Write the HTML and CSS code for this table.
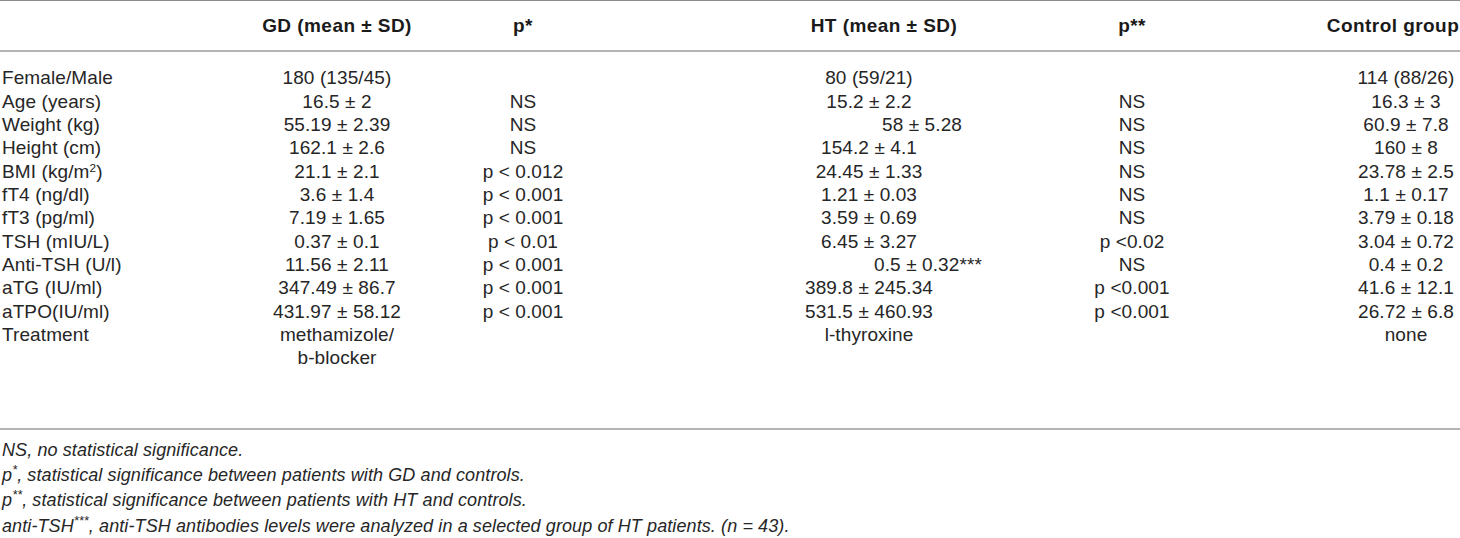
FILE: index.html
```html
<!DOCTYPE html>
<html lang="en">
<head>
  <meta charset="UTF-8" />
  <meta name="viewport" content="width=device-width, initial-scale=1.0" />
  <title>Patient characteristics</title>
  <link rel="stylesheet" href="styles.css">
</head>
<body>
  <table class="data-table">
    <colgroup>
      <col class="col-label">
      <col class="col-gd">
      <col class="col-p1">
      <col class="col-ht">
      <col class="col-p2">
      <col class="col-ctrl">
    </colgroup>
    <thead>
      <tr>
        <th></th>
        <th>GD (mean ± SD)</th>
        <th>p*</th>
        <th>HT (mean ± SD)</th>
        <th>p**</th>
        <th>Control group</th>
      </tr>
    </thead>
    <tbody>
      <tr class="first">
        <td>Female/Male</td><td>180 (135/45)</td><td></td><td>80 (59/21)</td><td></td><td>114 (88/26)</td>
      </tr>
      <tr>
        <td>Age (years)</td><td>16.5 ± 2</td><td>NS</td><td>15.2 ± 2.2</td><td>NS</td><td>16.3 ± 3</td>
      </tr>
      <tr>
        <td>Weight (kg)</td><td>55.19 ± 2.39</td><td>NS</td><td class="indent">58 ± 5.28</td><td>NS</td><td>60.9 ± 7.8</td>
      </tr>
      <tr>
        <td>Height (cm)</td><td>162.1 ± 2.6</td><td>NS</td><td>154.2 ± 4.1</td><td>NS</td><td>160 ± 8</td>
      </tr>
      <tr>
        <td>BMI (kg/m<sup>2</sup>)</td><td>21.1 ± 2.1</td><td>p &lt; 0.012</td><td>24.45 ± 1.33</td><td>NS</td><td>23.78 ± 2.5</td>
      </tr>
      <tr>
        <td>fT4 (ng/dl)</td><td>3.6 ± 1.4</td><td>p &lt; 0.001</td><td>1.21 ± 0.03</td><td>NS</td><td>1.1 ± 0.17</td>
      </tr>
      <tr>
        <td>fT3 (pg/ml)</td><td>7.19 ± 1.65</td><td>p &lt; 0.001</td><td>3.59 ± 0.69</td><td>NS</td><td>3.79 ± 0.18</td>
      </tr>
      <tr>
        <td>TSH (mIU/L)</td><td>0.37 ± 0.1</td><td>p &lt; 0.01</td><td>6.45 ± 3.27</td><td>p &lt;0.02</td><td>3.04 ± 0.72</td>
      </tr>
      <tr>
        <td>Anti-TSH (U/l)</td><td>11.56 ± 2.11</td><td>p &lt; 0.001</td><td class="indent wide">0.5 ± 0.32***</td><td>NS</td><td>0.4 ± 0.2</td>
      </tr>
      <tr>
        <td>aTG (IU/ml)</td><td>347.49 ± 86.7</td><td>p &lt; 0.001</td><td>389.8 ± 245.34</td><td>p &lt;0.001</td><td>41.6 ± 12.1</td>
      </tr>
      <tr>
        <td>aTPO(IU/ml)</td><td>431.97 ± 58.12</td><td>p &lt; 0.001</td><td>531.5 ± 460.93</td><td>p &lt;0.001</td><td>26.72 ± 6.8</td>
      </tr>
      <tr class="last">
        <td>Treatment</td><td>methamizole/<br>b-blocker</td><td></td><td>l-thyroxine</td><td></td><td>none</td>
      </tr>
    </tbody>
  </table>

  <div class="notes">
    <p>NS, no statistical significance.</p>
    <p>p<sup>*</sup>, statistical significance between patients with GD and controls.</p>
    <p>p<sup>**</sup>, statistical significance between patients with HT and controls.</p>
    <p>anti-TSH<sup>***</sup>, anti-TSH antibodies levels were analyzed in a selected group of HT patients. (n = 43).</p>
  </div>
</body>
</html>
```

FILE: styles.css
```css
body {
  margin: 0;
  font-family: "Liberation Sans", Arial, Helvetica, sans-serif;
  font-size: 19px;
  letter-spacing: 0.1px;
  color: #262626;
  background: #ffffff;
}

.data-table {
  width: 1460px;
  table-layout: fixed;
  border-collapse: collapse;
}
.col-label { width: 250px; }
.col-gd { width: 174px; }
.col-p1 { width: 198px; }
.col-ht { width: 386px; }
.col-p2 { width: 248px; }
.col-ctrl { width: 204px; }

.data-table th,
.data-table td {
  padding: 0;
  text-align: center;
  white-space: nowrap;
  vertical-align: top;
  line-height: 23.33px;
}
.data-table td:first-child {
  text-align: left;
  padding-left: 2px;
}

.data-table thead th {
  font-weight: bold;
  letter-spacing: 0.45px;
  color: #1a1a1a;
  padding-top: 13px;
  padding-bottom: 13px;
  border-top: 1px solid #8c8c8c;
  border-bottom: 2px solid #b4b4b4;
}
.data-table thead th:nth-child(4) { padding-left: 138px; }
.data-table thead th:nth-child(6) { padding-left: 70px; overflow: visible; }

.data-table td:nth-child(4) { padding-left: 108px; }
.data-table td:nth-child(6) { padding-left: 96px; }
.data-table td.indent { padding-left: 214px; }
.data-table td.indent.wide { padding-left: 226px; }

.data-table tr.first td { padding-top: 14px; }
.data-table tr.last td { padding-bottom: 58px; }

sup {
  font-size: 0.62em;
  line-height: 0;
  vertical-align: 0.55em;
}

.notes {
  border-top: 2px solid #b4b4b4;
  padding: 8px 0 0 2px;
  font-size: 18px;
  font-style: italic;
}
.notes p {
  margin: 0;
  line-height: 25.4px;
}
.notes sup {
  font-size: 0.7em;
}
```
